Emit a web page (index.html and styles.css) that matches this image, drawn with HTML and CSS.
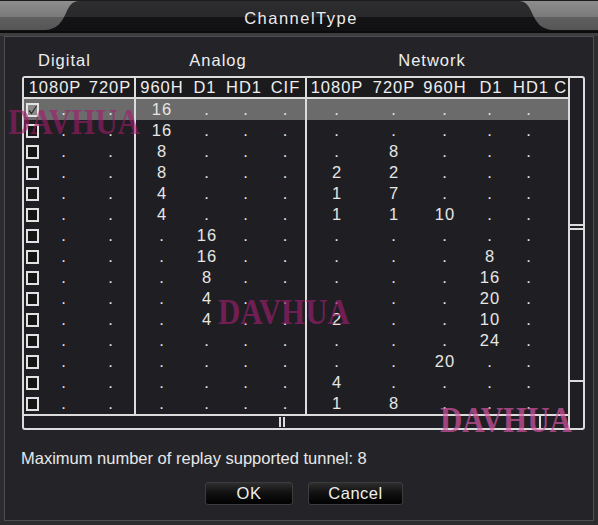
FILE: index.html
```html
<!DOCTYPE html>
<html>
<head>
<meta charset="utf-8">
<link rel="stylesheet" href="styles.css">
</head>
<body>
<div class="window">
  <div class="titlebar">
    <svg class="tab" viewBox="0 0 80 36" width="80" height="36">
      <defs>
        <linearGradient id="tgl" gradientUnits="userSpaceOnUse" x1="0" y1="1" x2="0" y2="30">
          <stop offset="0" stop-color="#8e8e8e"/>
          <stop offset="0.54" stop-color="#7a7a7a"/>
          <stop offset="0.56" stop-color="#606060"/>
          <stop offset="1" stop-color="#555555"/>
        </linearGradient>
      </defs>
      <path d="M0,1 H79 C72,1 69,6 66,13 C62,22 57,30 44,30 H0 Z" fill="url(#tgl)"/>
    </svg>
    <div class="title">ChannelType</div>
    <svg class="tab" viewBox="0 0 80 36" width="80" height="36">
      <defs>
        <linearGradient id="tgr" gradientUnits="userSpaceOnUse" x1="0" y1="1" x2="0" y2="30">
          <stop offset="0" stop-color="#8e8e8e"/>
          <stop offset="0.54" stop-color="#7a7a7a"/>
          <stop offset="0.56" stop-color="#606060"/>
          <stop offset="1" stop-color="#555555"/>
        </linearGradient>
      </defs>
      <path transform="translate(80,0) scale(-1,1)" d="M0,1 H79 C72,1 69,6 66,13 C62,22 57,30 44,30 H0 Z" fill="url(#tgr)"/>
    </svg>
  </div>
  <div class="frame">
    <div class="panel">
      <div class="groups">
        <span class="g-digital">Digital</span>
        <span class="g-analog">Analog</span>
        <span class="g-network">Network</span>
      </div>
      <div class="list">
        <div class="main">
          <div class="row hdr">
            <span class="cell hd">1080P</span><span class="cell d2">720P</span>
            <span class="cell a1">960H</span><span class="cell a2">D1</span><span class="cell a3">HD1</span><span class="cell a4">CIF</span>
            <span class="cell n1">1080P</span><span class="cell n2">720P</span><span class="cell n3">960H</span><span class="cell n4">D1</span><span class="cell n5">HD1</span><span class="cell n6">CIF</span>
          </div>
          <div class="body">
            <div class="row sel"><span class="cell ck"><span class="box on"><svg viewBox="0 0 9 10" width="9" height="10"><path d="M1,5.5 L3.5,8.5 L8.5,1" fill="none" stroke="#2a2a2a" stroke-width="1.2"/></svg></span></span><span class="cell d1">.</span><span class="cell d2">.</span><span class="cell a1">16</span><span class="cell a2">.</span><span class="cell a3">.</span><span class="cell a4">.</span><span class="cell n1">.</span><span class="cell n2">.</span><span class="cell n3">.</span><span class="cell n4">.</span><span class="cell n5">.</span><span class="cell n6"></span></div>
            <div class="row"><span class="cell ck"><span class="box"></span></span><span class="cell d1">.</span><span class="cell d2">.</span><span class="cell a1">16</span><span class="cell a2">.</span><span class="cell a3">.</span><span class="cell a4">.</span><span class="cell n1">.</span><span class="cell n2">.</span><span class="cell n3">.</span><span class="cell n4">.</span><span class="cell n5">.</span><span class="cell n6"></span></div>
            <div class="row"><span class="cell ck"><span class="box"></span></span><span class="cell d1">.</span><span class="cell d2">.</span><span class="cell a1">8</span><span class="cell a2">.</span><span class="cell a3">.</span><span class="cell a4">.</span><span class="cell n1">.</span><span class="cell n2">8</span><span class="cell n3">.</span><span class="cell n4">.</span><span class="cell n5">.</span><span class="cell n6"></span></div>
            <div class="row"><span class="cell ck"><span class="box"></span></span><span class="cell d1">.</span><span class="cell d2">.</span><span class="cell a1">8</span><span class="cell a2">.</span><span class="cell a3">.</span><span class="cell a4">.</span><span class="cell n1">2</span><span class="cell n2">2</span><span class="cell n3">.</span><span class="cell n4">.</span><span class="cell n5">.</span><span class="cell n6"></span></div>
            <div class="row"><span class="cell ck"><span class="box"></span></span><span class="cell d1">.</span><span class="cell d2">.</span><span class="cell a1">4</span><span class="cell a2">.</span><span class="cell a3">.</span><span class="cell a4">.</span><span class="cell n1">1</span><span class="cell n2">7</span><span class="cell n3">.</span><span class="cell n4">.</span><span class="cell n5">.</span><span class="cell n6"></span></div>
            <div class="row"><span class="cell ck"><span class="box"></span></span><span class="cell d1">.</span><span class="cell d2">.</span><span class="cell a1">4</span><span class="cell a2">.</span><span class="cell a3">.</span><span class="cell a4">.</span><span class="cell n1">1</span><span class="cell n2">1</span><span class="cell n3">10</span><span class="cell n4">.</span><span class="cell n5">.</span><span class="cell n6"></span></div>
            <div class="row"><span class="cell ck"><span class="box"></span></span><span class="cell d1">.</span><span class="cell d2">.</span><span class="cell a1">.</span><span class="cell a2">16</span><span class="cell a3">.</span><span class="cell a4">.</span><span class="cell n1">.</span><span class="cell n2">.</span><span class="cell n3">.</span><span class="cell n4">.</span><span class="cell n5">.</span><span class="cell n6"></span></div>
            <div class="row"><span class="cell ck"><span class="box"></span></span><span class="cell d1">.</span><span class="cell d2">.</span><span class="cell a1">.</span><span class="cell a2">16</span><span class="cell a3">.</span><span class="cell a4">.</span><span class="cell n1">.</span><span class="cell n2">.</span><span class="cell n3">.</span><span class="cell n4">8</span><span class="cell n5">.</span><span class="cell n6"></span></div>
            <div class="row"><span class="cell ck"><span class="box"></span></span><span class="cell d1">.</span><span class="cell d2">.</span><span class="cell a1">.</span><span class="cell a2">8</span><span class="cell a3">.</span><span class="cell a4">.</span><span class="cell n1">.</span><span class="cell n2">.</span><span class="cell n3">.</span><span class="cell n4">16</span><span class="cell n5">.</span><span class="cell n6"></span></div>
            <div class="row"><span class="cell ck"><span class="box"></span></span><span class="cell d1">.</span><span class="cell d2">.</span><span class="cell a1">.</span><span class="cell a2">4</span><span class="cell a3">.</span><span class="cell a4">.</span><span class="cell n1">.</span><span class="cell n2">.</span><span class="cell n3">.</span><span class="cell n4">20</span><span class="cell n5">.</span><span class="cell n6"></span></div>
            <div class="row"><span class="cell ck"><span class="box"></span></span><span class="cell d1">.</span><span class="cell d2">.</span><span class="cell a1">.</span><span class="cell a2">4</span><span class="cell a3">.</span><span class="cell a4">.</span><span class="cell n1">2</span><span class="cell n2">.</span><span class="cell n3">.</span><span class="cell n4">10</span><span class="cell n5">.</span><span class="cell n6"></span></div>
            <div class="row"><span class="cell ck"><span class="box"></span></span><span class="cell d1">.</span><span class="cell d2">.</span><span class="cell a1">.</span><span class="cell a2">.</span><span class="cell a3">.</span><span class="cell a4">.</span><span class="cell n1">.</span><span class="cell n2">.</span><span class="cell n3">.</span><span class="cell n4">24</span><span class="cell n5">.</span><span class="cell n6"></span></div>
            <div class="row"><span class="cell ck"><span class="box"></span></span><span class="cell d1">.</span><span class="cell d2">.</span><span class="cell a1">.</span><span class="cell a2">.</span><span class="cell a3">.</span><span class="cell a4">.</span><span class="cell n1">.</span><span class="cell n2">.</span><span class="cell n3">20</span><span class="cell n4">.</span><span class="cell n5">.</span><span class="cell n6"></span></div>
            <div class="row"><span class="cell ck"><span class="box"></span></span><span class="cell d1">.</span><span class="cell d2">.</span><span class="cell a1">.</span><span class="cell a2">.</span><span class="cell a3">.</span><span class="cell a4">.</span><span class="cell n1">4</span><span class="cell n2">.</span><span class="cell n3">.</span><span class="cell n4">.</span><span class="cell n5">.</span><span class="cell n6"></span></div>
            <div class="row"><span class="cell ck"><span class="box"></span></span><span class="cell d1">.</span><span class="cell d2">.</span><span class="cell a1">.</span><span class="cell a2">.</span><span class="cell a3">.</span><span class="cell a4">.</span><span class="cell n1">1</span><span class="cell n2">8</span><span class="cell n3">.</span><span class="cell n4">.</span><span class="cell n5">.</span><span class="cell n6"></span></div>
          </div>
          <div class="hscroll">
            <div class="hthumb"><span class="hgrip"></span><span class="hgrip"></span></div>
          </div>
        </div>
        <div class="vscroll">
          <div class="vthumb"><span class="vgrip"></span><span class="vgrip"></span></div>
        </div>
      </div>
      <div class="note">Maximum number of replay supported tunnel: 8</div>
      <div class="buttons">
        <button class="btn ok">OK</button>
        <button class="btn cancel">Cancel</button>
      </div>
    </div>
  </div>
  <span class="wm wm1">DAVHUA</span>
  <span class="wm wm2">DAVHUA</span>
  <span class="wm wm3">DAVHUA</span>
</div>
</body>
</html>
```

FILE: styles.css
```css
* { box-sizing: border-box; }
html, body { margin: 0; padding: 0; }
body {
  width: 598px;
  height: 525px;
  overflow: hidden;
  background: #1a1a1c;
  font-family: "Liberation Sans", Arial, sans-serif;
  color: #e8e8e8;
}
.window {
  position: relative;
  width: 598px;
  height: 525px;
  display: flex;
  flex-direction: column;
}
.titlebar {
  height: 36px;
  flex: none;
  display: flex;
  background: linear-gradient(to bottom,
    #1c1c1c 0, #1c1c1c 1px,
    #2d2d2f 1px, #29292b 17px,
    #141416 17px, #111113 31px,
    #0b0b0b 31px, #0b0b0b 33px,
    #3e3e41 33px, #3e3e41 36px);
}
.tab { width: 80px; height: 36px; flex: none; display: block; }
.title {
  flex: 1;
  text-align: center;
  font-size: 16.5px;
  letter-spacing: 1.5px;
  line-height: 36px;
  padding-left: 4px;
  color: #ececec;
}
.frame {
  flex: 1;
  display: flex;
  padding: 0 4px 4px 4px;
  background: #2c2c2f;
}
.panel {
  flex: 1;
  display: flex;
  flex-direction: column;
  border: 1px solid #4e4e52;
  background: #242428;
  padding: 0 0 15px 17px;
}
.groups {
  display: flex;
  height: 39px;
  padding-top: 13px;
  font-size: 16.5px;
  letter-spacing: 1px;
  line-height: 20px;
  color: #eeeeee;
}
.g-digital { width: 112px; padding-left: 16px; }
.g-analog { width: 168px; text-align: center; }
.g-network { width: 260px; text-align: center; }

.list {
  display: flex;
  width: 563px;
  height: 354px;
  flex: none;
  border: 2px solid #dcdcdc;
  border-radius: 3px;
  background: #1f1f23;
}
.main {
  width: 544px;
  display: flex;
  flex-direction: column;
  overflow: hidden;
}
.row {
  display: flex;
  flex: none;
  height: 21px;
  line-height: 21px;
  font-size: 16.5px;
  letter-spacing: 1px;
  color: #e6e6e6;
}
.hdr {
  border-bottom: 2px solid #dcdcdc;
  line-height: 19px;
  background: #1b1b1e;
  color: #eeeeee;
}
.sel { background: #6b6b6b; }
.cell { flex: none; text-align: center; white-space: nowrap; }
.ck { width: 16px; display: flex; align-items: center; }
.hd { width: 62px; }
.d1 { width: 48px; }
.d2 { width: 46px; }
.hd + .d2 { width: 48px; }
.a1 { width: 54px; border-left: 2px solid #dcdcdc; }
.a2 { width: 38px; }
.hdr .a2 { width: 34px; }
.hdr .a3 { width: 44px; }
.a3 { width: 40px; }
.a4 { width: 39px; }
.n1 { width: 62px; border-left: 2px solid #dcdcdc; }
.n2 { width: 54px; }
.n3 { width: 48px; }
.n4 { width: 42px; }
.hdr .n4 { width: 44px; }
.n5 { width: 36px; }
.hdr .n5 { width: 34px; }
.n6 { width: 44px; }
.box {
  width: 13px;
  height: 14px;
  margin-left: 2px;
  border: 2px solid #e2e2e2;
  background: #151515;
  display: flex;
  align-items: center;
  justify-content: center;
}
.box svg { display: block; }
.box.on { background: #8a8a8a; }

.body { height: 315px; flex: none; }
.hscroll {
  height: 14px;
  flex: none;
  display: flex;
  border-top: 2px solid #dcdcdc;
}
.hthumb {
  width: 517px;
  border-right: 2px solid #dcdcdc;
  display: flex;
  justify-content: center;
  align-items: center;
  gap: 2px;
}
.hgrip { width: 2px; height: 10px; background: #dcdcdc; }
.vscroll {
  width: 15px;
  flex: none;
  border-left: 2px solid #dcdcdc;
}
.vthumb {
  height: 304px;
  border-bottom: 2px solid #dcdcdc;
  display: flex;
  flex-direction: column;
  justify-content: center;
  gap: 2px;
  padding-bottom: 4px;
}
.vgrip { height: 2px; background: #dcdcdc; }

.note {
  margin-top: 18px;
  margin-left: -1px;
  font-size: 16.5px;
  line-height: 20px;
  letter-spacing: 0;
  color: #e8e8e8;
}
.buttons {
  margin-top: 14px;
  display: flex;
  gap: 15px;
  padding-left: 183px;
}
.btn {
  height: 23px;
  padding: 0;
  font-family: "Liberation Sans", Arial, sans-serif;
  font-size: 16.5px;
  letter-spacing: 0.5px;
  color: #eeeeee;
  background: linear-gradient(to bottom, #2e2e2e 0, #121212 45%, #000000 100%);
  border: 1px solid #3c3c3c;
  border-radius: 3px;
}
.ok { width: 88px; }
.cancel { width: 95px; }

.wm {
  position: absolute;
  font-family: "Liberation Serif", "Times New Roman", serif;
  font-weight: bold;
  font-size: 36px;
  line-height: 36px;
  white-space: nowrap;
  transform: scaleX(0.86);
  transform-origin: left top;
  pointer-events: none;
}
.wm1 { left: 8px; top: 104px; color: rgba(163, 26, 109, 0.6); }
.wm2 { left: 218px; top: 294px; color: rgba(150, 30, 105, 0.7); }
.wm3 { left: 440px; top: 402px; color: rgba(215, 85, 165, 0.7); }
```
